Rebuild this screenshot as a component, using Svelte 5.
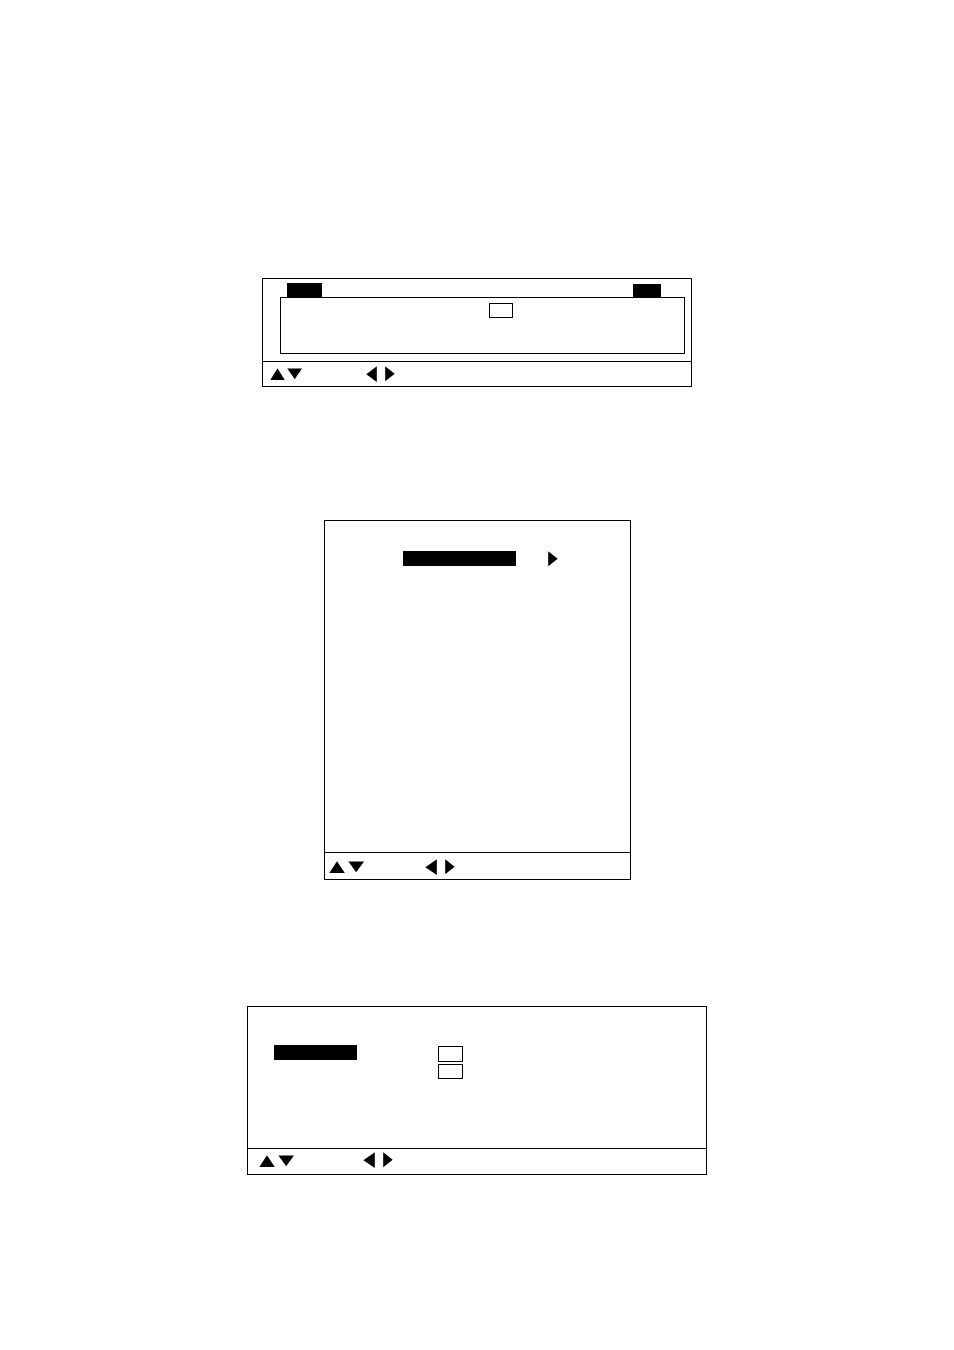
<script>
  let range = $state('');
  let first = $state('');
  let second = $state('');
  let activeTab = $state('left');

  const shapes = {
    up: { width: 16, points: '8,2.2 15.8,14 0.3,14' },
    down: { width: 16, points: '0.4,2.4 16,2.4 8.2,13.2' },
    left: { width: 12, points: '11.8,0.3 11.8,16 0.3,8.2' },
    right: { width: 10, points: '0.2,0.3 9.7,7.8 0.2,15.2' }
  };
</script>

{#snippet arrow(dir)}
  <button class="arrow {dir}" aria-label={dir}>
    <svg viewBox="0 0 {shapes[dir].width} 16" preserveAspectRatio="none" aria-hidden="true">
      <polygon points={shapes[dir].points} />
    </svg>
  </button>
{/snippet}

{#snippet keys()}
  <footer class="keys">
    <div class="vertical">
      {@render arrow('up')}
      {@render arrow('down')}
    </div>
    <div class="horizontal">
      {@render arrow('left')}
      {@render arrow('right')}
    </div>
  </footer>
{/snippet}

<main>
  <section class="panel tabs-panel">
    <div class="body">
      <div class="tabs">
        <button class="tab wide" aria-label="First tab" onclick={() => (activeTab = 'left')}></button>
        <button class="tab" aria-label="Second tab" onclick={() => (activeTab = 'right')}></button>
      </div>
      <div class="sheet" data-tab={activeTab}>
        <input aria-label="Value" bind:value={range} />
      </div>
    </div>
    {@render keys()}
  </section>

  <section class="panel menu-panel">
    <div class="body">
      <button class="bar" aria-label="Selected item"></button>
      {@render arrow('right')}
    </div>
    {@render keys()}
  </section>

  <section class="panel form-panel">
    <div class="body">
      <button class="bar" aria-label="Selected item"></button>
      <div class="fields">
        <input class="tall" aria-label="First value" bind:value={first} />
        <input aria-label="Second value" bind:value={second} />
      </div>
    </div>
    {@render keys()}
  </section>
</main>

<style>
:global(body) {
  background: #fff;
}

main {
  display: flex;
  flex-direction: column;
  align-items: center;
  padding: 278px 24px 175px;
  font-family: "Liberation Sans", Arial, sans-serif;
}

main * {
  box-sizing: border-box;
}

.panel {
  width: 100%;
  border: 1px solid #000;
}

button {
  display: block;
  padding: 0;
  border: none;
  border-radius: 0;
  background: none;
  cursor: pointer;
}

input {
  display: block;
  width: 25px;
  height: 15px;
  padding: 0 2px;
  border: 1px solid #000;
  border-radius: 0;
  background: #fff;
  font-family: inherit;
  font-size: 11px;
}

/* arrow keys */
.keys {
  display: flex;
  align-items: flex-start;
  border-top: 1px solid #000;
}

.vertical,
.horizontal {
  display: flex;
  gap: 3px;
}

.horizontal {
  gap: 8px;
}

.arrow {
  flex: none;
  width: 16px;
  height: 16px;
}

.arrow.left {
  width: 12px;
}

.arrow.right {
  width: 10px;
}

.arrow svg {
  display: block;
  width: 100%;
  height: 100%;
}

.bar {
  height: 15px;
  background: #000;
}

/* panel with tabs */
.tabs-panel {
  max-width: 430px;
  margin-bottom: 133px;
}

.tabs-panel .body {
  padding: 4px 6px 7px 17px;
}

.tabs {
  display: flex;
  justify-content: space-between;
  align-items: flex-end;
  padding: 0 24px 0 7px;
}

.tab {
  width: 28px;
  height: 13px;
  background: #000;
}

.tab.wide {
  width: 35px;
  height: 14px;
}

.sheet {
  display: flex;
  justify-content: center;
  min-height: 57px;
  padding: 5px 0 0 37px;
  border: 1px solid #000;
}

.sheet input {
  width: 24px;
}

.tabs-panel .keys {
  gap: 64px;
  padding: 4px 7px;
}

.tabs-panel .vertical {
  gap: 2px;
}

.tabs-panel .up,
.tabs-panel .down {
  width: 15px;
}

.tabs-panel .keys .left {
  width: 11px;
}

/* menu panel */
.menu-panel {
  max-width: 307px;
  margin-bottom: 126px;
}

.menu-panel .body {
  display: flex;
  align-items: flex-start;
  gap: 32px;
  min-height: 331px;
  padding: 30px 72px 0 78px;
}

.menu-panel .bar {
  flex: 1;
}

.menu-panel .keys {
  gap: 61px;
  padding: 6px 4px 4px;
}

/* form panel */
.form-panel {
  max-width: 460px;
}

.form-panel .body {
  display: flex;
  align-items: flex-start;
  gap: 81px;
  min-height: 141px;
  padding: 38px 26px 0;
}

.form-panel .bar {
  width: 83px;
}

.fields {
  display: flex;
  flex-direction: column;
  gap: 2px;
  padding-top: 1px;
}

.fields .tall {
  height: 16px;
}

.form-panel .keys {
  gap: 69px;
  padding: 3px 11px 5px;
}

.form-panel .vertical {
  padding-top: 1px;
}
</style>
